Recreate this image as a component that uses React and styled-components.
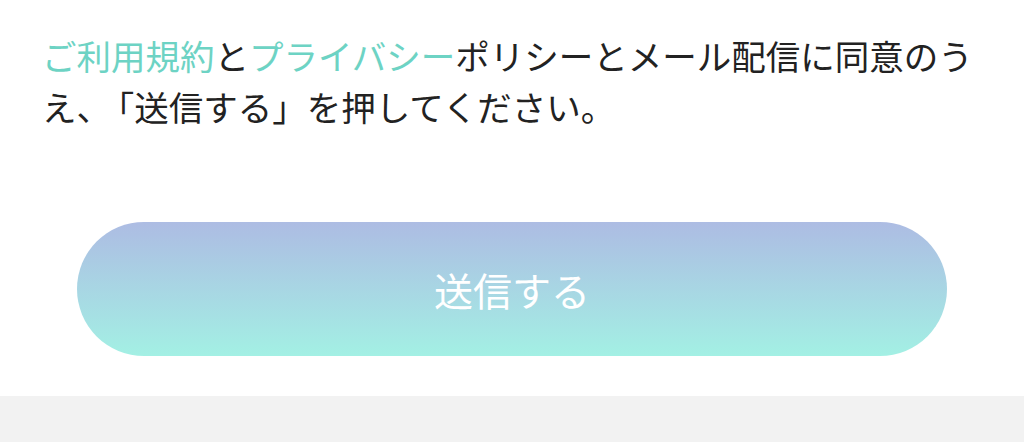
import styled, { createGlobalStyle } from 'styled-components';

const GlobalStyle = createGlobalStyle`
  html, body {
    margin: 0;
    padding: 0;
    background: #fff;
  }
  body {
    font-family: "Noto Sans CJK JP", "Noto Sans", sans-serif;
  }
`;

const Page = styled.div`
  width: 1024px;
  height: 442px;
  display: flex;
  flex-direction: column;
  overflow: hidden;
`;

const Form = styled.section`
  background: #fff;
  padding: 30px 42px 40px;
  display: flex;
  flex-direction: column;
  gap: 90px;
`;

const Notice = styled.p`
  margin: 0;
  font-size: 34.5px;
  line-height: 51px;
  color: #222;
`;

const TextLink = styled.a`
  color: #6dd3c4;
  text-decoration: none;
`;

// 「 keeps a little room after the comma, as in the design
const Bracket = styled.span`
  margin-left: 6px;
`;

const SubmitButton = styled.button`
  align-self: center;
  width: 870px;
  height: 134px;
  border: none;
  border-radius: 67px;
  background: linear-gradient(180deg, #adbce3 0%, #a3f0e4 100%);
  color: #fff;
  font-family: "Noto Sans CJK JP", "Noto Sans", sans-serif;
  font-size: 39px;
  cursor: pointer;
`;

const Footer = styled.div`
  flex: 1;
  background: #f2f2f2;
`;

export default function App() {
  return (
    <>
      <GlobalStyle />
      <Page>
        <Form>
          <Notice>
            <TextLink href="#">ご利用規約</TextLink>と
            <TextLink href="#">プライバシー</TextLink>
            ポリシーとメール配信に同意のうえ、<Bracket>「送信する」を押してください。</Bracket>
          </Notice>
          <SubmitButton type="button">送信する</SubmitButton>
        </Form>
        <Footer />
      </Page>
    </>
  );
}
